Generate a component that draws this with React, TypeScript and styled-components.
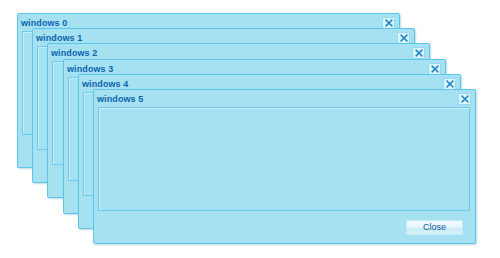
import styled, { createGlobalStyle } from "styled-components";

const GlobalStyle = createGlobalStyle`
  html, body {
    margin: 0;
    padding: 0;
    background: #fff;
  }
  body {
    font-family: "Liberation Sans", Arial, sans-serif;
  }
`;

const windows = [0, 1, 2, 3, 4, 5];

type WindowProps = {
  index: number;
};

const DesktopWindow = ({ index }: WindowProps) => {
  return (
    <Wrapper
      style={{
        left: 17 + Math.round(index * 15.2),
        top: 13 + Math.round(index * 15.2),
      }}
    >
      <TitleBar>
        <Title>windows {index}</Title>
        <CloseIcon aria-label="close">
          <svg width="8" height="8" viewBox="0 0 8 8">
            <path
              d="M1.2 1.2 L6.8 6.8 M6.8 1.2 L1.2 6.8"
              stroke="#1f86c9"
              strokeWidth="1.6"
              strokeLinecap="square"
            />
          </svg>
        </CloseIcon>
      </TitleBar>
      <Body />
      <Footer>
        <CloseButton>Close</CloseButton>
      </Footer>
    </Wrapper>
  );
};

const App = () => {
  return (
    <>
      <GlobalStyle />
      <Desktop>
        {windows.map((i) => (
          <DesktopWindow key={i} index={i} />
        ))}
      </Desktop>
    </>
  );
};

const Desktop = styled.div`
  position: relative;
  width: 500px;
  height: 258px;
  overflow: hidden;
  background: #fff;
`;
const Wrapper = styled.div`
  position: absolute;
  width: 383px;
  height: 155px;
  box-sizing: border-box;
  display: flex;
  flex-direction: column;
  background: #a6e1f2;
  border: 1px solid #5cc6ea;
  border-radius: 2px;
  box-shadow: 1px 1px 2px rgba(80, 140, 170, 0.35);
`;
const TitleBar = styled.div`
  height: 17px;
  display: flex;
  align-items: center;
  justify-content: space-between;
  padding: 0 4px 0 3px;
`;
const Title = styled.span`
  font-size: 9px;
  font-weight: 700;
  color: #0b64ad;
  letter-spacing: 0.1px;
`;
const CloseIcon = styled.div`
  width: 13px;
  height: 12px;
  box-sizing: border-box;
  display: flex;
  align-items: center;
  justify-content: center;
  background: #def4fb;
  border: 1px solid #92d9f2;
  border-radius: 1px;
`;
const Body = styled.div`
  height: 104px;
  margin: 0 5px 0 4px;
  box-sizing: border-box;
  border: 1px solid #6dccec;
  box-shadow: inset 1px 1px 0 #c4eef9;
  background: #a6e1f2;
`;
const Footer = styled.div`
  flex: 1;
  display: flex;
  align-items: center;
  justify-content: flex-end;
  padding-right: 12px;
`;
const CloseButton = styled.div`
  width: 57px;
  height: 15px;
  box-sizing: border-box;
  display: flex;
  align-items: center;
  justify-content: center;
  font-size: 9px;
  color: #0b5c9c;
  background: linear-gradient(#f2fbfe 0%, #e3f5fb 55%, #c8ebf6 56%, #d8f2fa 100%);
  border: 1px solid #c2e9f6;
  border-radius: 1px;
`;

export default App;
